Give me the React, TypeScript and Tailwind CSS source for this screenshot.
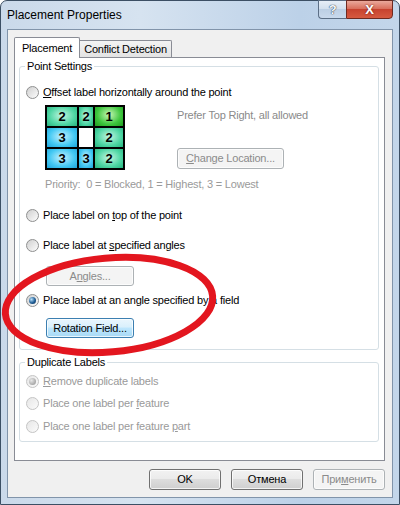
import React from 'react';

type RadioProps = { checked?: boolean; disabled?: boolean };

const Radio: React.FC<RadioProps> = ({ checked, disabled }) => (
  <span
    className={`flex h-[13px] w-[13px] shrink-0 items-center justify-center rounded-full border ${
      disabled
        ? 'border-[#c4c4c4] bg-[linear-gradient(135deg,#e6e6e6,#fbfbfb)]'
        : 'border-[#8e8f8f] bg-[linear-gradient(135deg,#cfcfcf,#fdfdfd)]'
    }`}
  >
    {checked && (
      <span
        className={`h-[7px] w-[7px] rounded-full ${
          disabled
            ? 'bg-[radial-gradient(circle_at_35%_35%,#e8e8e8,#a8a8a8_70%)]'
            : 'bg-[radial-gradient(circle_at_35%_35%,#b9e1fb,#1f5d95_55%,#0c2f52)]'
        }`}
      />
    )}
  </span>
);

type OptionProps = { checked?: boolean; disabled?: boolean; className?: string; children: React.ReactNode };

const Option: React.FC<OptionProps> = ({ checked, disabled, className = '', children }) => (
  <div className={`flex h-[16px] items-center gap-[4px] ${className}`}>
    <Radio checked={checked} disabled={disabled} />
    <span className={`whitespace-nowrap leading-[16px] ${disabled ? 'text-[#9a9a9a]' : 'text-black'}`}>{children}</span>
  </div>
);

type BtnKind = 'normal' | 'focused' | 'disabled';

const btnKinds: Record<BtnKind, string> = {
  normal:
    'border-[#707070] bg-[linear-gradient(180deg,#f2f2f2_0%,#ebebeb_45%,#dddddd_50%,#cfcfcf_100%)] text-black',
  focused:
    'border-[#3c7fb1] bg-[linear-gradient(180deg,#eaf6fd_0%,#d9f0fc_45%,#bee6fd_50%,#a7d9f5_100%)] text-black',
  disabled: 'border-[#adb2b5] bg-[#f4f4f4] text-[#8b8b8b]',
};

const Button: React.FC<{ kind?: BtnKind; className?: string; children: React.ReactNode }> = ({
  kind = 'normal',
  className = '',
  children,
}) => (
  <button
    type="button"
    className={`flex shrink-0 items-center justify-center rounded-[3px] border leading-none shadow-[inset_0_0_0_1px_rgba(255,255,255,0.75)] ${btnKinds[kind]} ${className}`}
  >
    {children}
  </button>
);

const Group: React.FC<{ title: string; className?: string; children: React.ReactNode }> = ({
  title,
  className = '',
  children,
}) => (
  <div className={`relative flex flex-col rounded-[3px] border border-[#d5dfe5] pl-[6px] ${className}`}>
    <span className="absolute -top-[8px] left-[5px] bg-white px-[2px] leading-[14px]">{title}</span>
    {children}
  </div>
);

const cellColors = {
  teal: 'bg-[radial-gradient(ellipse_at_50%_45%,#c4f6e2_0%,#4fd6a4_60%,#27b47f_100%)]',
  green: 'bg-[radial-gradient(ellipse_at_50%_40%,#c9f7b6_0%,#3ec63e_60%,#1f9c1f_100%)]',
  cyan: 'bg-[radial-gradient(ellipse_at_50%_45%,#c6f1ff_0%,#44c9f3_60%,#1fa6dc_100%)]',
  white: 'bg-white',
};

const cells: { n: string; c: keyof typeof cellColors }[] = [
  { n: '2', c: 'teal' },
  { n: '2', c: 'teal' },
  { n: '1', c: 'green' },
  { n: '3', c: 'cyan' },
  { n: '', c: 'white' },
  { n: '2', c: 'teal' },
  { n: '3', c: 'cyan' },
  { n: '3', c: 'cyan' },
  { n: '2', c: 'teal' },
];

const PriorityGrid: React.FC = () => (
  <div className="grid h-[65px] w-[80px] shrink-0 grid-cols-[30px_14px_28px] grid-rows-3 gap-[2px] bg-black p-[2px]">
    {cells.map((cell, i) => (
      <div
        key={i}
        className={`flex items-center justify-center text-[13px] font-bold leading-none tracking-normal text-black ${cellColors[cell.c]}`}
      >
        {cell.n}
      </div>
    ))}
  </div>
);

const App: React.FC = () => {
  return (
    <div className="relative h-[505px] w-[400px] overflow-hidden font-['Liberation_Sans',Arial,sans-serif] text-[11px] tracking-[-0.2px] text-black">
      <div className="flex h-full flex-col rounded-t-[7px] border border-[#3c4f64] bg-[linear-gradient(90deg,#cad9ea_0%,#d6e3f0_35%,#bcd1e8_75%,#c3d6ea_100%)]">
        {/* title bar */}
        <div className="flex h-[28px] shrink-0 items-start justify-between">
          <span className="ml-[6px] mt-[6px] text-[12px] leading-[16px] tracking-normal">Placement Properties</span>
          <div className="-mt-px mr-[6px] flex">
            <div className="flex h-[19px] w-[28px] items-center justify-center rounded-bl-[4px] border border-r-0 border-[#5c6f86] bg-[linear-gradient(180deg,#e6eef7_0%,#d3e0ee_45%,#bccfe4_50%,#c9d9ec_100%)] text-[13px] font-bold leading-none text-[#f5f8fc] [text-shadow:0_0_1px_#2a3a4c,0_0_1px_#2a3a4c]">
              ?
            </div>
            <div className="flex h-[19px] w-[47px] items-center justify-center rounded-br-[4px] border border-[#6e2a20] bg-[linear-gradient(180deg,#eaa99b_0%,#d9705d_45%,#c7432f_50%,#d65a40_100%)] text-[13px] font-bold leading-none text-white [text-shadow:0_0_2px_#5a140c]">
              X
            </div>
          </div>
        </div>

        {/* client area */}
        <div className="mx-[6px] flex flex-1 flex-col border border-[#8194aa] bg-[#f0f0f0] pl-[6px] pt-[7px]">
          <div className="relative z-10 -mb-px flex items-end">
            <div className="flex h-[21px] w-[66px] items-center justify-center rounded-t-[2px] border border-b-0 border-[#898c95] bg-white">
              Placement
            </div>
            <div className="mb-px flex h-[17px] w-[92px] items-center justify-center rounded-tr-[2px] border border-b-0 border-l-0 border-[#898c95] bg-[linear-gradient(180deg,#f3f3f3,#e3e3e3)]">
              Conflict Detection
            </div>
          </div>

          <div className="flex h-[404px] w-[371px] flex-col border border-[#898c95] bg-white">
            <Group title="Point Settings" className="ml-[4px] mt-[8px] h-[284px] w-[360px]">
              <Option className="mt-[17px]">
                <u>O</u>ffset label horizontally around the point
              </Option>
              <div className="mt-[5px] flex">
                <div className="ml-[19px]">
                  <PriorityGrid />
                </div>
                <div className="ml-[52px] flex flex-col items-start">
                  <span className="mt-[2px] leading-[16px] text-[#8a8a8a]">Prefer Top Right, all allowed</span>
                  <Button kind="disabled" className="mt-[25px] h-[21px] w-[107px]">
                    <span>
                      <u>C</u>hange Location...
                    </span>
                  </Button>
                </div>
              </div>
              <span className="ml-[19px] mt-[6px] leading-[16px] text-[#9a9a9a]">
                Priority:&nbsp; 0 = Blocked, 1 = Highest, 3 = Lowest
              </span>
              <Option className="mt-[15px]">
                Place label on <u>t</u>op of the point
              </Option>
              <Option className="mt-[14px]">
                Place label at <u>s</u>pecified angles
              </Option>
              <Button kind="disabled" className="ml-[20px] mt-[13px] h-[20px] w-[88px]">
                <span>
                  A<u>n</u>gles...
                </span>
              </Button>
              <Option checked className="mt-[6px]">
                Place label at an angle specified by a field
              </Option>
              <Button kind="focused" className="ml-[20px] mt-[10px] h-[20px] w-[88px]">
                Rotation Field...
              </Button>
            </Group>

            <Group title="Duplicate Labels" className="ml-[4px] mt-[12px] h-[80px] w-[360px]">
              <Option checked disabled className="mt-[10px]">
                <u>R</u>emove duplicate labels
              </Option>
              <Option disabled className="mt-[6px]">
                Place one label per <u>f</u>eature
              </Option>
              <Option disabled className="mt-[7px]">
                Place one label per feature <u>p</u>art
              </Option>
            </Group>
          </div>

          <div className="mt-[8px] flex justify-end gap-[10px] pr-[7px]">
            <Button className="h-[21px] w-[72px]">OK</Button>
            <Button className="h-[21px] w-[72px]">Отмена</Button>
            <Button kind="disabled" className="h-[21px] w-[72px]">
              <span>
                При<u>м</u>енить
              </span>
            </Button>
          </div>
        </div>
        <div className="h-[6px] shrink-0" />
      </div>

      {/* red hand-drawn ellipse over the dialog */}
      <svg className="pointer-events-none absolute left-0 top-0" width="400" height="505">
        <ellipse
          cx="109"
          cy="305"
          rx="104"
          ry="47"
          transform="rotate(-5 109 305)"
          fill="none"
          stroke="#e3161f"
          strokeWidth="7"
        />
      </svg>
    </div>
  );
};

export default App;
